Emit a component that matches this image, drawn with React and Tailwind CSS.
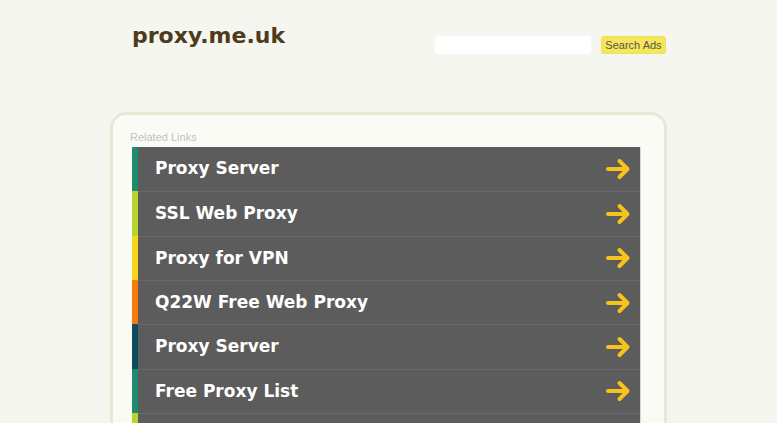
import React from 'react';

const links = [
    { label: 'Proxy Server', color: 'bg-[#1f8a6d]' },
    { label: 'SSL Web Proxy', color: 'bg-[#b8d42f]' },
    { label: 'Proxy for VPN', color: 'bg-[#f7d619]' },
    { label: 'Q22W Free Web Proxy', color: 'bg-[#f77a0a]' },
    { label: 'Proxy Server', color: 'bg-[#0e4b5e]' },
    { label: 'Free Proxy List', color: 'bg-[#1f8a6d]' },
    { label: '', color: 'bg-[#b8d42f]' },
];

function Arrow() {
    return (
        <svg width="25" height="22" viewBox="0 0 25 22" fill="none">
            <path d="M2 11 H21" stroke="#f6c31c" strokeWidth="4" strokeLinecap="round" />
            <path d="M13.5 3 L21.5 11 L13.5 19" stroke="#f6c31c" strokeWidth="4" strokeLinecap="round" strokeLinejoin="round" />
        </svg>
    );
}

export default function App() {
    return (
        <div className="h-[423px] overflow-hidden bg-[#f6f6f0] font-['DejaVu_Sans',sans-serif]">
            <div className="mx-auto w-[557px]">
                {/* Header */}
                <div className="flex h-[112px] items-start justify-between">
                    <h1 className="ml-[22px] mt-[25px] text-[22px] leading-[22px] font-bold text-[#4e3b1c]">
                        proxy.me.uk
                    </h1>
                    <div className="mr-[1px] mt-[36px] flex items-center gap-[10px]">
                        <input
                            type="text"
                            className="h-[18px] w-[156px] rounded-[4px] bg-white outline-none"
                        />
                        <button className="h-[18px] w-[65px] rounded-[3px] border border-[#ece060] bg-[#f6e759] font-['Liberation_Sans',sans-serif] text-[11px] leading-none text-[#555]">
                            Search Ads
                        </button>
                    </div>
                </div>

                {/* Related links box */}
                <div className="h-[340px] rounded-[16px] border-[3px] border-[#e6e9d3] bg-[#fbfbf6] pl-[17px] pt-[16px]">
                    <p className="font-['Liberation_Sans',sans-serif] text-[11px] leading-[13px] text-[#c2c2c2]">
                        Related Links
                    </p>
                    <ul className="ml-[2px] mt-[3px] w-[509px] border-r border-[#d8d8d8]">
                        {links.map((link, i) => (
                            <li key={i} className="flex h-[44.33px]">
                                <span className={`w-[6px] ${link.color}`} />
                                <a
                                    href="#"
                                    className={`flex flex-1 items-center justify-between bg-[#5c5c5c] pl-[17px] pr-[9px] text-[17px] font-bold text-white ${i > 0 ? 'border-t border-[#686868]' : ''}`}
                                >
                                    <span>{link.label}</span>
                                    {link.label && <Arrow />}
                                </a>
                            </li>
                        ))}
                    </ul>
                </div>
            </div>
        </div>
    );
}
